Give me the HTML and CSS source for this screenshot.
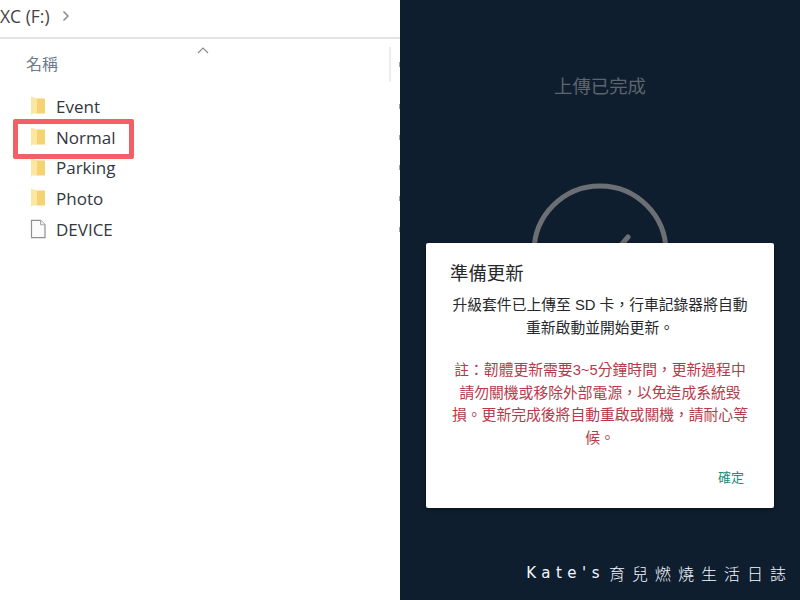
FILE: index.html
```html
<!DOCTYPE html>
<html lang="zh-Hant">
<head>
<meta charset="utf-8">
<title>準備更新</title>
<link rel="stylesheet" href="styles.css">
</head>
<body>
<div class="page">
  <section class="explorer">
    <div class="pathbar">
      <span class="drive">XC (F:)</span>
      <svg class="chev" width="8" height="12" viewBox="0 0 8 12"><path d="M1.500 1.500 6 6l-4.500 4.500" fill="none" stroke="#8a8a8a" stroke-width="1.500"/></svg>
    </div>
    <div class="colhead">
      <span class="colname">名稱</span>
      <svg class="caret" width="12" height="7" viewBox="0 0 12 7"><path d="M1 6 6 1l5 5" fill="none" stroke="#8c8c8c" stroke-width="1.200"/></svg>
      <span class="coldiv"></span>
      <i class="tick tick-head"></i>
    </div>
    <ul class="files">
      <li class="file"><svg class="ico" width="16" height="20" viewBox="0 0 16 20"><use href="#folder"/></svg><span>Event</span><i class="tick"></i></li>
      <li class="file"><svg class="ico" width="16" height="20" viewBox="0 0 16 20"><use href="#folder"/></svg><span>Normal</span><i class="tick"></i></li>
      <li class="file"><svg class="ico" width="16" height="20" viewBox="0 0 16 20"><use href="#folder"/></svg><span>Parking</span><i class="tick"></i></li>
      <li class="file"><svg class="ico" width="16" height="20" viewBox="0 0 16 20"><use href="#folder"/></svg><span>Photo</span><i class="tick"></i></li>
      <li class="file"><svg class="ico" width="16" height="20" viewBox="0 0 16 20"><path d="M1.500 1.300h9l4.500 4.500v12.900h-13.500z" fill="#fbfbfb" stroke="#8f8f8f" stroke-width="1.200"/><path d="M10.500 1.300v4.500h4.500" fill="#f0f0f0" stroke="#a8a8a8"/></svg><span>DEVICE</span><i class="tick"></i></li>
    </ul>
    <div class="highlight"></div>
  </section>
  <section class="app">
    <h1 class="status">上傳已完成</h1>
    <svg class="ring" width="144" height="144" viewBox="0 0 144 144"><circle cx="72" cy="72" r="66" fill="none" stroke="#6c6f74" stroke-width="5"/><path d="M56 78l14 14 30-35" fill="none" stroke="#6c6f74" stroke-width="5" stroke-linecap="round"/></svg>
    <div class="dialog">
      <h2 class="dtitle">準備更新</h2>
      <p class="dbody">升級套件已上傳至 SD 卡，行車記錄器將自動重新啟動並開始更新。</p>
      <p class="dwarn">註：韌體更新需要3~5分鐘時間，更新過程中請勿關機或移除外部電源，以免造成系統毀損。更新完成後將自動重啟或關機，請耐心等候。</p>
      <div class="dactions"><span class="ok">確定</span></div>
    </div>
    <div class="mark"><span class="mark-latin">Kate's</span><span class="mark-cjk">育兒燃燒生活日誌</span></div>
  </section>
</div>
<svg class="defs" width="0" height="0"><defs>
  <g id="folder"><path d="M6 2.500h8.500q.5 0 .5.500V17.500H6z" fill="#f5d272"/><path d="M1 .5 7 2.500v15H2.500L1 19z" fill="#fbe6a2"/></g>
</defs></svg>
</body>
</html>
```
FILE: styles.css
```css
* { box-sizing: border-box; }
html, body { margin: 0; padding: 0; }
body { width: 800px; height: 600px; overflow: hidden; font-family: "Open Sans", "Noto Sans CJK TC", sans-serif; }
.defs { position: absolute; }
.page { display: flex; width: 800px; height: 600px; }

.explorer { position: relative; width: 400px; height: 600px; background: #fff; overflow: hidden; }
.pathbar { display: flex; align-items: center; height: 39px; border-bottom: 2px solid #e4e4e4; padding-bottom: 6px; }
.drive { font-size: 17.500px; color: #444; white-space: nowrap; }
.chev { margin-left: 12px; }
.colhead { display: flex; align-items: flex-start; height: 46px; }
.colname { margin: 13px 0 0 26px; font-size: 16px; line-height: 22px; color: #6f7b8b; font-family: "Noto Sans CJK TC", sans-serif; }
.caret { margin: 8px 0 0 139px; }
.coldiv { width: 2px; height: 35px; margin: 8px 0 0 180px; background: #ececec; }

.files { list-style: none; margin: 6px 0 0; padding: 0; }
.file { display: flex; align-items: center; height: 30.700px; padding-left: 30px; font-size: 17px; color: #33373e; }
.ico { flex: none; margin-right: 10px; }
.tick { display: block; width: 1px; height: 5px; margin-left: auto; background: #a8a39d; }
.tick-head { margin-top: 23px; }
.highlight { position: absolute; left: 13px; top: 119px; width: 121px; height: 40px; border: 5px solid #f26065; border-radius: 2px; }

.app { position: relative; width: 400px; height: 600px; background: #0f1e2f; display: flex; flex-direction: column; align-items: center; overflow: hidden; }
.status { margin: 72px 0 0; font-size: 18.400px; line-height: 26px; font-weight: 400; color: #5e646c; font-family: "Noto Sans CJK TC", sans-serif; }
.ring { margin-top: 82px; }

.dialog { position: absolute; left: 26px; top: 243px; width: 348px; height: 265px; background: #fff; border-radius: 2px; box-shadow: 0 1px 4px rgba(0,0,0,.5); padding: 19px 24px 0; font-family: "Liberation Sans", "Noto Sans CJK TC", sans-serif; }
.dtitle { margin: 0; font-size: 18.400px; line-height: 24px; font-weight: 400; color: #26282b; }
.dbody { margin: 8px 0 0; font-size: 14.800px; line-height: 23px; color: #26282b; text-align: center; }
.dwarn { margin: 19px 0 0; font-size: 14.800px; line-height: 22.700px; color: #b63a4a; text-align: center; }
.dactions { display: flex; justify-content: flex-end; margin-top: 18px; padding-right: 6px; }
.ok { font-size: 13px; line-height: 20px; color: #1f8a78; }

.mark { position: absolute; right: 14px; bottom: 16px; display: flex; align-items: center; font-family: "DejaVu Sans", "Noto Sans CJK TC", sans-serif; font-size: 16px; line-height: 22px; color: #f2f8ff; white-space: nowrap; }
.mark-latin { letter-spacing: 5.500px; margin-right: 4px; font-size: 15px; }
.mark-cjk { letter-spacing: 7px; margin-right: -7px; font-weight: 300; font-family: "Noto Sans CJK TC", sans-serif; }
```
